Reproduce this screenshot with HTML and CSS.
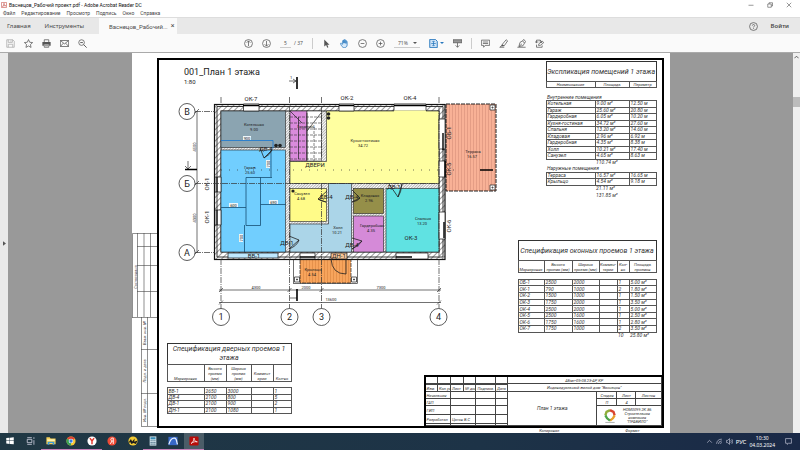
FILE: index.html
```html
<!DOCTYPE html>
<html lang="ru">
<head>
<meta charset="utf-8">
<title>Васнецов_Рабочий проект.pdf - Adobe Acrobat Reader DC</title>
<link rel="stylesheet" href="styles.css">
</head>
<body>
<div class="app">
  <header class="titlebar">
    <svg class="appicon" viewBox="0 0 12 12"><rect x=".7" y=".7" width="10.6" height="10.6" rx="1.5" fill="#fff" stroke="#c8554d" stroke-width="1.4"/><path d="M3 9c2-2 3-5 3-6.500C6 6 8 7.500 9.500 7.500 7 7 5 7.500 3 9z" fill="none" stroke="#b5302a"/></svg>
    <span class="wintitle">Васнецов_Рабочий проект.pdf - Adobe Acrobat Reader DC</span>
    <div class="winbtns">
      <button aria-label="Свернуть"><svg viewBox="0 0 12 12"><path d="M1 6.500h10"/></svg></button>
      <button aria-label="Развернуть"><svg viewBox="0 0 12 12"><path d="M1.500 4h7v6.500h-7zM4 4V1.500h7V8H8.500"/></svg></button>
      <button aria-label="Закрыть"><svg viewBox="0 0 12 12"><path d="M1.500 1.500l9 9M10.500 1.500l-9 9"/></svg></button>
    </div>
  </header>
  <nav class="menu"><button>Файл</button><button>Редактирование</button><button>Просмотр</button><button>Подпись</button><button>Окно</button><button>Справка</button></nav>
  <div class="tabs">
    <button class="tab">Главная</button><button class="tab">Инструменты</button>
    <div class="doctab"><span>Васнецов_Рабочий...</span><button aria-label="Закрыть вкладку">×</button></div>
    <div class="account"><button aria-label="Справка"><svg viewBox="0 0 24 24"><circle cx="12" cy="12" r="10.500"/><path d="M9 9.500c0-4 6-4 6 0 0 2-3 2.500-3 5M12 16.500v2"/></svg></button><button class="login">Войти</button></div>
  </div>
  <div class="toolbar">
    <div class="group files">
      <button class="off" aria-label="Сохранить"><svg viewBox="0 0 24 24"><path d="M2 2h16l4 4v16H2zM6 2v7h11V2M6 22v-8h12v8M13 4v3"/></svg></button>
      <button aria-label="Избранное"><svg viewBox="0 0 24 24"><path d="M12 1.500l3.200 7.200 7.800.8-5.800 5.300 1.600 7.700L12 18.600l-6.800 3.900 1.600-7.700L1 9.500l7.800-.8z"/></svg></button>
      <button aria-label="Печать"><svg viewBox="0 0 24 24"><path d="M6 8V2h12v6M6 14h12v8H6zM8 18h8"/><path class="fill" d="M1 8h22v10h-4v-5H5v5H1z"/></svg></button>
      <button aria-label="Почта"><svg viewBox="0 0 24 24"><path d="M1 4h22v16H1zM1 4l11 9 11-9M1 20l8-9M23 20l-8-9"/></svg></button>
      <button aria-label="Найти"><svg viewBox="0 0 24 24"><circle cx="9.500" cy="9.500" r="7.500"/><path d="M15 15l8 8M6 9.500h7" stroke-width="2.500"/></svg></button>
    </div>
    <div class="group">
      <button aria-label="Предыдущая страница"><svg viewBox="0 0 24 24"><circle cx="12" cy="12" r="10.500"/><path d="M12 19V5M7 10l5-5 5 5"/></svg></button>
      <button aria-label="Следующая страница"><svg viewBox="0 0 24 24"><circle cx="12" cy="12" r="10.500"/><path d="M12 5v14M7 14l5 5 5-5"/></svg></button>
      <label class="pager"><input value="5" aria-label="Страница"><span>/ 37</span></label>
      <i class="sep"></i>
      <button aria-label="Выделение"><svg viewBox="0 0 24 24"><path class="fill" d="M6 1v19l5-4 3 7 3-1-3-7h6z"/></svg></button>
      <button class="blue" aria-label="Рука"><svg viewBox="0 0 24 24"><path fill="#d8eafa" d="M7 14V5c0-2 3-2 3 0v6-8c0-2 3-2 3 0v8-7c0-2 3-2 3 0v8-5c0-2 3-2 3 0v9c0 4-3 7-7 7s-6-2-8-5l-3-6c1-2 3-1 6 2z"/></svg></button>
      <button aria-label="Уменьшить"><svg viewBox="0 0 24 24"><circle cx="12" cy="12" r="10.500"/><path d="M7 12h10"/></svg></button>
      <button aria-label="Увеличить"><svg viewBox="0 0 24 24"><circle cx="12" cy="12" r="10.500"/><path d="M7 12h10M12 7v10"/></svg></button>
      <div class="zoom"><select aria-label="Масштаб"><option>71%</option></select><i class="caret"></i></div>
      <button class="blue wide" aria-label="По ширине"><svg viewBox="0 0 24 24"><path d="M2 1h15l5 5v17H2z" fill="#cfe3f6" stroke-width="2.500"/><path d="M12 6v12M6 12h12M9 8l3-3 3 3M9 16l3 3 3-3"/></svg><i class="caret"></i></button>
      <button aria-label="Прокрутка"><svg viewBox="0 0 24 24"><path class="fill" d="M0 2h24v8H0z" fill-opacity=".6"/><path d="M0 2h24v8H0zM12 10v12M7 17l5 5 5-5"/></svg></button>
      <i class="sep"></i>
      <button aria-label="Комментарий"><svg viewBox="0 0 24 24"><path d="M1 3h22v14H11l-4 5v-5H1zM5 8h14M5 12h14" stroke-width="2"/></svg></button>
      <button aria-label="Выделить текст"><svg viewBox="0 0 24 24"><path d="M9 14L19 2l4 3-9 13H7zM7 18l-5 4h12"/><path class="fill" d="M9 14l5 4-8 2z"/></svg></button>
      <button aria-label="Подписать"><svg viewBox="0 0 24 24"><path d="M5 20l3-11 7-4 5 6-4 7zM5 20l8-7M15 5l3-4 5 6-3 4M1 22h22" stroke-width="2"/></svg></button>
      <button aria-label="Изменить"><svg viewBox="0 0 24 24"><path d="M4 11V3h10l5 5M4 15v7h15v-5M14 3v6h5M9 17l2-5 9-6 3 4-9 7zM0 8h9" stroke-width="2"/></svg></button>
    </div>
  </div>

  <main class="viewer">
    <button class="rail" aria-label="Панель навигации"><svg viewBox="0 0 4 6"><path d="M0 0l4 3-4 3z" fill="#555"/></svg></button>
    <div class="canvas">
      <article class="sheet">
        <svg class="margin" viewBox="132 54 25 374">
          <g fill="none" stroke="#444" stroke-width=".6"><path d="M132.500 318.500V234.500H157M137.500 234v84M144 234v84M150.500 234v84M137 247.500h20M137 266.500h20M137 292.500h20M132 318.500h25M141.500 318v109M147.500 318v109M141 350.500h16M141 394.500h16M141 427.500h16"/></g>
          <g class="mt"><text transform="translate(136.500 278) rotate(-90)">Согласовано</text><text transform="translate(146 334) rotate(-90)">Взам. инв. №</text><text transform="translate(146 372) rotate(-90)">Подп. и дата</text><text transform="translate(146 411) rotate(-90)">Инв. № подл.</text></g>
        </svg>
        <div class="body">
        <div class="frame">
          <div class="upper">
            <svg class="plan" viewBox="174 62 330 270">
              <defs>
                <pattern id="h" width="4" height="4" patternUnits="userSpaceOnUse" patternTransform="rotate(45)"><rect width="4" height="4" fill="#fff"/><path d="M0 0v4" stroke="#333" stroke-width="1"/></pattern>
                <pattern id="h2" width="2" height="2" patternUnits="userSpaceOnUse" patternTransform="rotate(45)"><rect width="2" height="2" fill="#fff"/><path d="M0 0v2" stroke="#444" stroke-width=".8"/></pattern>
                <pattern id="ter" x="446" width="3" height="10" patternUnits="userSpaceOnUse"><rect width="3" height="10" fill="#f8b196"/><path d="M.5 0v10" stroke="#d79079" stroke-width=".6"/></pattern>
                <pattern id="por" x="300" width="3" height="10" patternUnits="userSpaceOnUse"><rect width="3" height="10" fill="#f7a45c"/><path d="M.5 0v10" stroke="#d88440" stroke-width=".6"/></pattern>
              </defs>
              <text x="184" y="76" class="pt">001_План 1 этажа</text>
              <text x="184" y="85" class="ps">1:80</text>
              <rect x="446" y="105" width="50" height="87" fill="url(#ter)" stroke="#222" stroke-dasharray="4 1"/>
              <rect x="293.500" y="260" width="64" height="24.500" fill="#fff" stroke="#333" stroke-width=".7"/>
              <rect x="300" y="260" width="51" height="24" fill="url(#por)" stroke="#222" stroke-width=".7" stroke-dasharray="4 1"/>
              <rect x="214.500" y="105.500" width="230.500" height="155" fill="url(#h)" stroke="#111" stroke-width="1.200"/>
              <path d="M217 258V107.500H443V258z" fill="none" stroke="#222" stroke-width=".9"/>
              <rect x="221" y="112" width="218" height="141" fill="url(#h2)" stroke="#222"/>
              <g stroke="#222" stroke-width=".6">
                <rect x="221" y="112" width="64.500" height="36.500" fill="#8ba4b1"/>
                <rect x="221" y="151" width="64.500" height="102" fill="#71cefe"/>
                <path d="M326.500 112H439v72.500H290V162.500h36.500z" fill="#ffffa0"/>
                <rect x="290" y="112" width="17" height="50" fill="#da8bdc"/>
                <rect x="307" y="112" width="14.500" height="50" fill="#fff"/>
                <path d="M328.500 184.500h23V253H290v-28h38.500z" fill="#abd5e8"/>
                <rect x="290" y="189.500" width="36.500" height="33" fill="#fffb88"/>
                <rect x="353.500" y="189.500" width="30" height="25" fill="#958f49"/>
                <rect x="353.500" y="217" width="30" height="36" fill="#d58ad8"/>
                <rect x="386" y="189.500" width="53" height="63.500" fill="#60e2e2"/>
              </g>
              <!-- Openings in the walls -->
              <g fill="#fff" stroke="#111" stroke-width=".7">
                <path d="M243.500 105h15.500v7h-15.500zM339 105h15v7h-15zM394 105h32v7h-32zM439 120h6v30h-6zM439 162h6v16h-6zM439 213h6v27h-6zM396 254h32v6h-32zM215 178h6v15h-6zM215 211h6v15h-6zM300 254h15v6h-15z"/>
                <path d="M228 254h50v5h-50z" fill="#bfe9ff"/><path d="M331 254h16v6h-16z" fill="#f7c79a"/>
              </g>
              <path d="M217 178v15M217 211v15M443 134v17M445 162v16M444 223v16M396 258h16M300 258h15M243 106.500h16M339 106.500h15M394 106.500h32" fill="none" stroke="#000" stroke-width="1.400"/>
              <path d="M394 112.500h32" stroke="#ffffa0" stroke-width="2"/>
              <!-- Staircase -->
              <path d="M290 118h31M290 124h31M290 130h31M290 136h31M290 142h31M290 148h31M290 154h31M290 160h31M314 128v34" fill="none" stroke="#333" stroke-width=".6" stroke-dasharray="3 1"/>
              <path d="M298.500 160v-42M307 114v47M307 132l14-18M290 112l12 12" fill="none" stroke="#222" stroke-width=".7"/>
              <!-- Axes and dimensions -->
              <g fill="none" stroke="#333" stroke-width=".7">
                <path stroke-dasharray="6 1 1 1" d="M195 112.500h20M195 184.500h244M195 253.500h20M221 98v7M289.500 98v162M321.500 98v60M321.500 185v75M221 260v50M289.500 260v50M321.500 260v50M439 98v212"/>
                <path d="M197 112v142M219 291h222M219 303.500h222M195 114l4-4M195 186l4-4M195 255l4-4M219 293l4-4M287.500 293l4-4M319.500 293l4-4M437 293l4-4M219 305.500l4-4M437 305.500l4-4M289 82h7M293 80l3 2-3 2M290 299h7M188 162v8M185 167l3 3 3-3"/>
                <path d="M221 171h240" stroke-dasharray="1 7"/>
              </g>
              <path d="M297 78v12M297 290v12M185 170.500h12M480 171h13" stroke="#000" stroke-width="1.600"/>
              <g fill="none" stroke="#174f74" stroke-width=".8"><path d="M246 226.500V178.500h14.500v48zM221 208.500h25M260.500 205.500H286M244.500 226v27M271 148v30M260 178.500h12"/><path d="M221 141.500h52v8" stroke="#1677d2"/></g>
              <g fill="#edf6fb"><path d="M243 137h8v4h-8zM229 204h9v4h-9zM269 201h9v4h-9zM239 235h4v8h-4zM266 161h4v8h-4z"/></g>
              <!-- Door swings -->
              <g fill="none" stroke="#222" stroke-width=".8"><path d="M260 149l4 10 8-8q-2 5-8 8M289 237l10 4-10 9q8-3 10-9M327 192l-9 8 8 3q-6-1-8-3M352 191l8 8-8 4q6-1 8-4M352 239l10 3-10 8q7-3 10-8M389 185l9 13 4-13q-1 9-4 13M331 260q1 15 15 15v-15"/></g>
              <g fill="#fff" stroke="#333" stroke-width=".8"><path d="M490 106h5v5h-5zM490 186h5v5h-5zM294.500 278h5v5h-5zM351.500 278h5v5h-5z"/><path d="M492 108h1v1h-1zM492 188h1v1h-1zM296.500 280h1v1h-1zM353.500 280h1v1h-1z"/></g>
              <g fill="#222"><circle cx="276" cy="146.500" r="1.800"/><circle cx="280" cy="146.500" r="1.800"/><circle cx="328.500" cy="115" r="1.800"/><circle cx="328.500" cy="119" r="1.800"/><circle cx="293" cy="192" r="1.600"/></g>
              <g fill="#fff" stroke="#333" stroke-width=".8"><circle cx="187" cy="112.500" r="8"/><circle cx="187" cy="184.500" r="8"/><circle cx="187" cy="253.500" r="8"/><circle cx="221" cy="318" r="8.500"/><circle cx="289.500" cy="318" r="8.500"/><circle cx="321.500" cy="318" r="8.500"/><circle cx="438.500" cy="318" r="8.500"/></g>
              <g class="ax"><text x="187" y="116">В</text><text x="187" y="188">Б</text><text x="187" y="257">А</text><text x="221" y="321">1</text><text x="289.500" y="321">2</text><text x="321.500" y="321">3</text><text x="438.500" y="321">4</text></g>
              <g class="lb">
                <text x="251" y="102">ОК-7</text><text x="347" y="101">ОК-2</text><text x="410" y="101">ОК-4</text><text x="411" y="241">ОК-3</text><text x="254" y="259">ВВ-1</text><text x="287" y="246">ДВ-1</text><text x="326" y="200">ДВ-4</text><text x="352" y="200">ДВ-4</text><text x="352" y="248">ДВ-4</text><text x="394" y="190">ДВ-1</text><text x="339" y="259">ДН-1</text><text x="266" y="152">ДВ-4</text><text x="315" y="168">ДВЕРИ</text>
                <text transform="translate(209 185) rotate(-90)">ОК-1</text><text transform="translate(209 218) rotate(-90)">ОК-1</text><text transform="translate(451 134) rotate(-90)">ОБ-1</text><text transform="translate(451 170) rotate(-90)">ОК-5</text><text transform="translate(451 227) rotate(-90)">ОК-6</text>
              </g>
              <g class="rm">
                <text x="254" y="127">Котельная</text><text x="254" y="132">9.00</text><text x="250" y="170">Гараж</text><text x="250" y="175">25.60</text><text x="365" y="143">Кухня-гостиная</text><text x="363" y="148">34.72</text><text x="306" y="129">Гардероб</text><text x="302" y="196">Санузел</text><text x="301" y="201">4.68</text><text x="338" y="230">Холл</text><text x="337" y="235">10.21</text><text x="370" y="198">Кладовая</text><text x="369" y="203">2.96</text><text x="372" y="228">Гардеробная</text><text x="371" y="233">4.35</text><text x="423" y="221">Спальня</text><text x="422" y="226">13.20</text><text x="473" y="154">Терраса</text><text x="472" y="159">16.57</text><text x="313" y="272">Крыльцо</text><text x="312" y="277">4.54</text>
              </g>
              <g class="dm"><text x="256" y="290">4300</text><text x="306" y="290">2000</text><text x="381" y="290">7300</text><text x="331" y="302">13600</text><text transform="translate(196 148) rotate(-90)">4500</text><text transform="translate(196 219) rotate(-90)">4300</text><text x="247" y="141">900</text><text x="233.500" y="208">600</text><text x="273.500" y="205">690</text><text transform="translate(242.500 239) rotate(-90)">700</text><text transform="translate(269.500 165) rotate(-90)">700</text><text x="291" y="80">1</text></g>
            </svg>
            <div class="lists">
              <table class="spec rooms">
                <caption>Экспликация помещений 1 этажа</caption>
                <colgroup><col class="w49"><col class="w34"><col class="w27"></colgroup>
                <thead><tr><th>Наименование</th><th>Площадь</th><th>Периметр</th></tr></thead>
                <tbody>
                <tr class="open gap"><td colspan="3"></td></tr>
                <tr class="open"><td colspan="3">Внутренние помещения</td></tr>
                <tr><td>Котельная</td><td>9.00 м²</td><td>12.50 м</td></tr>
                <tr><td>Гараж</td><td>25.60 м²</td><td>20.80 м</td></tr>
                <tr><td>Гардеробная</td><td>6.05 м²</td><td>10.20 м</td></tr>
                <tr><td>Кухня-гостиная</td><td>34.72 м²</td><td>27.60 м</td></tr>
                <tr><td>Спальня</td><td>13.20 м²</td><td>14.60 м</td></tr>
                <tr><td>Кладовая</td><td>2.96 м²</td><td>6.92 м</td></tr>
                <tr><td>Гардеробная</td><td>4.35 м²</td><td>8.38 м</td></tr>
                <tr><td>Холл</td><td>10.21 м²</td><td>17.40 м</td></tr>
                <tr><td>Санузел</td><td>4.65 м²</td><td>8.63 м</td></tr>
                <tr class="open"><td></td><td>110.74 м²</td><td></td></tr>
                <tr class="open"><td colspan="3">Наружные помещения</td></tr>
                <tr><td>Терраса</td><td>16.57 м²</td><td>16.65 м</td></tr>
                <tr><td>Крыльцо</td><td>4.54 м²</td><td>9.18 м</td></tr>
                <tr class="open"><td></td><td>21.11 м²</td><td></td></tr>
                <tr class="open"><td></td><td>131.85 м²</td><td></td></tr>
                </tbody>
              </table>
              <table class="spec windows">
                <caption>Спецификация оконных проемов 1 этажа</caption>
                <colgroup><col class="w26"><col class="w28"><col class="w27"><col class="w18"><col class="w12"><col class="w27"></colgroup>
                <thead><tr><th>Маркировка</th><th>Высота проема (мм)</th><th>Ширина проема (мм)</th><th>Коммен-<br>тарии</th><th>Кол-<br>во</th><th>Площадь проемов</th></tr></thead>
                <tbody>
                <tr class="open gap"><td colspan="6"></td></tr>
                <tr><td>ОБ-1</td><td>2500</td><td>2000</td><td></td><td>1</td><td>5.00 м²</td></tr>
                <tr><td>ОК-1</td><td>790</td><td>1000</td><td></td><td>2</td><td>1.80 м²</td></tr>
                <tr><td>ОК-2</td><td>1500</td><td>1000</td><td></td><td>1</td><td>1.50 м²</td></tr>
                <tr><td>ОК-3</td><td>1750</td><td>2000</td><td></td><td>1</td><td>3.50 м²</td></tr>
                <tr><td>ОК-4</td><td>2500</td><td>2000</td><td></td><td>1</td><td>5.00 м²</td></tr>
                <tr><td>ОК-5</td><td>2500</td><td>1600</td><td></td><td>1</td><td>2.50 м²</td></tr>
                <tr><td>ОК-6</td><td>1750</td><td>1600</td><td></td><td>1</td><td>2.80 м²</td></tr>
                <tr><td>ОК-7</td><td>1750</td><td>1000</td><td></td><td>2</td><td>3.50 м²</td></tr>
                <tr class="open"><td colspan="4"></td><td>10</td><td>25.80 м²</td></tr>
                </tbody>
              </table>
            </div>
          </div>
          <div class="lower">
            <table class="spec doors">
              <caption>Спецификация дверных проемов 1 этажа</caption>
              <colgroup><col class="w37"><col class="w22"><col class="w25"><col class="w22"><col class="w18"></colgroup>
              <thead><tr><th>Маркировка</th><th>Высота<br>проема<br>(мм)</th><th>Ширина<br>проема<br>(мм)</th><th>Коммент<br>арии</th><th>Кол-во</th></tr></thead>
              <tbody>
              <tr class="open gap"><td colspan="5"></td></tr>
              <tr><td>ВВ-1</td><td>2650</td><td>3000</td><td></td><td>1</td></tr>
              <tr><td>ДВ-4</td><td>2100</td><td>800</td><td></td><td>5</td></tr>
              <tr><td>ДВ-1</td><td>2100</td><td>900</td><td></td><td>2</td></tr>
              <tr><td>ДН-1</td><td>2100</td><td>1080</td><td></td><td>1</td></tr>
              </tbody>
            </table>
            <table class="stamp">
              <colgroup><col class="w13"><col class="w13"><col class="w13"><col class="w12"><col class="w20"><col class="w12"><col><col class="w20"><col class="w19"><col class="w25"></colgroup>
              <tr><td></td><td></td><td></td><td></td><td></td><td></td><td colspan="4" class="c">АБмт-05-08.23-АР, КР</td></tr>
              <tr><td></td><td></td><td></td><td></td><td></td><td></td><td colspan="4" rowspan="2" class="c">Индивидуальный жилой дом "Васнецов"</td></tr>
              <tr><td>Изм.</td><td>Кол.уч</td><td>Лист</td><td>№ док</td><td class="c">Подпись</td><td>Дата</td></tr>
              <tr><td colspan="2">Начальник</td><td colspan="2"></td><td></td><td></td><td rowspan="5" class="c big">План 1 этажа</td><td class="c">Стадия</td><td class="c">Лист</td><td class="c">Листов</td></tr>
              <tr><td colspan="2">ГАП</td><td colspan="2"></td><td></td><td></td><td class="c">П</td><td class="c">4</td><td></td></tr>
              <tr><td colspan="2">ГИП</td><td colspan="2"></td><td></td><td></td><td colspan="3" rowspan="3"><div class="firm"><svg viewBox="0 0 24 24"><g fill="none" stroke-width="4"><path d="M4 11l2-6 6-3" stroke="#8fae3a"/><path d="M12 2l6 3 2 6" stroke="#d9432f"/><path d="M20 11l-3 5-5 4" stroke="#e8a02c"/><path d="M12 20l-5-4-3-5" stroke="#4fa548"/></g><path d="M4 23h16" stroke="#777"/></svg><span>НОМ0099.2К.86<br>Строительная<br>компания<br>"ПРАВИЛО"</span></div></td></tr>
              <tr><td colspan="2">Разработал</td><td colspan="2">Цагов В.С</td><td></td><td></td></tr>
              <tr><td colspan="2"></td><td colspan="2"></td><td></td><td></td></tr>
            </table>
          </div>
        </div>
        <div class="foot"><span>Копировал</span><span>Формат</span></div>
        </div>
      </article>
    </div>
    <div class="scroll"><button aria-label="Вверх"><svg viewBox="0 0 6 4"><path d="M.5 3.500L3 1l2.500 2.500" fill="none" stroke="#444"/></svg></button><i class="thumb"></i></div>
  </main>

  <footer class="taskbar">
    <div class="pins">
    <button aria-label="Пуск"><svg viewBox="0 0 24 24"><path fill="#fff" d="M3 5l8-1v7H3zM12 4l9-1v8h-9zM3 12h8v7l-8-1zM12 12h9v8l-9-1z"/></svg></button>
    <button aria-label="Представление задач"><svg viewBox="0 0 24 24"><path fill="none" stroke="#dde" stroke-width="1.800" d="M3 8h11v8H3zM3 4h11M3 20h11M19 3v4M19 10v11"/></svg></button>
    <button class="run" aria-label="Проводник"><svg viewBox="0 0 24 24"><path fill="#f5cf58" d="M1 3h8l2 3h12v14H1z"/><path fill="#fff3b5" d="M3 8h18v4H3z"/><path fill="#3b9bd9" d="M4 14h16v7h-4v-4H8v4H4z"/></svg></button>
    <button class="run" aria-label="Chrome"><svg viewBox="0 0 24 24"><circle cx="12" cy="12" r="11" fill="#f6c737"/><path fill="#dc4437" d="M12 12L2.500 6.500a11 11 0 0 1 19 0z"/><path fill="#39a257" d="M12 12v11A11 11 0 0 1 2.500 6.500z"/><circle cx="12" cy="12" r="5.500" fill="#fff"/><circle cx="12" cy="12" r="4" fill="#377ce0"/></svg></button>
    <button class="run" aria-label="Яндекс Браузер"><svg viewBox="0 0 24 24"><circle cx="12" cy="12" r="11" fill="#fff"/><path d="M7 5l5 7 5-7M12 12v8" stroke="#e43a30" stroke-width="3.500" fill="none"/></svg></button>
    <button aria-label="Яндекс"><svg viewBox="0 0 24 24"><circle cx="12" cy="12" r="11" fill="#ef4b36"/><path d="M15 19V5h-2c-5 0-5 7 0 7h2M12 12l-4 7" stroke="#fff" stroke-width="2.200" fill="none"/></svg></button>
    <button aria-label="Приложение"><svg viewBox="0 0 24 24"><circle cx="12" cy="12" r="11" fill="#f3cb35"/><path d="M1 16l6-9 3 6 6-7-1 8 8-3-4 8-6-2-5 2-2-4z" fill="#1c1c1c"/></svg></button>
    <button class="run" aria-label="Калькулятор"><svg viewBox="0 0 24 24"><path fill="#d8e8ef" d="M4 1h16v22H4z"/><path fill="#368bb5" d="M6 3h12v5H6z"/><path stroke="#4a6f85" stroke-width="2.500" stroke-dasharray="3 1.500" d="M6 11.500h13M6 15.500h13M6 19.500h13"/></svg></button>
    <button class="run" aria-label="Чертежи"><svg viewBox="0 0 24 24"><path fill="#3768c8" d="M1 2h22v20H1z"/><path d="M2 20C5 9 10 4 16 5s4 10 7 15" fill="none" stroke="#e6f0ff" stroke-width="3"/></svg></button>
    <button class="run active" aria-label="Acrobat Reader"><svg viewBox="0 0 24 24"><rect x="1" y="1" width="22" height="22" rx="3" fill="#b90c09"/><path d="M5 18c5-3 7-9 7-13 0 6 4 9 8 9-5-1-10 0-15 4z" fill="none" stroke="#fff" stroke-width="1.800"/></svg></button>
    </div>
    <div class="tray">
      <svg viewBox="0 0 12 12"><path d="M2 8l4-4 4 4"/></svg><svg viewBox="0 0 12 12"><path d="M1 10a9 9 0 0 1 9-8M4 10a6 6 0 0 1 6-5M7 10a3 3 0 0 1 3-2"/></svg><svg viewBox="0 0 12 12"><path d="M1 4h2l3-3v10L3 8H1zM8 4q2 2 0 4M10 2q3 4 0 8"/></svg>
      <span class="lang">РУС</span>
      <div class="clock"><span>10:30</span><span>04.03.2024</span></div>
      <svg viewBox="0 0 12 12"><path d="M1 1h10v8H6l-2 2V9H1z"/></svg>
    </div>
  </footer>
</div>
</body>
</html>
```
FILE: styles.css
```css
* { box-sizing: border-box; }
body { margin: 0; font-family: "Noto Sans", "Open Sans", sans-serif; color: #333; }
button, input, select { font: inherit; color: inherit; border: 0; padding: 0; margin: 0; background: none; }
button { display: flex; align-items: center; justify-content: center; }
svg { display: block; }
.app { display: flex; flex-direction: column; height: 100vh; overflow: hidden; background: #fff; }

.titlebar, .menu, .doctab { font-family: Roboto, "Liberation Sans", sans-serif; }
.titlebar { display: flex; align-items: center; height: 9px; padding: 0 8px 0 1px; gap: 2px; font-size: 5px; line-height: 8px; color: #111; }
.appicon { width: 6px; height: 6px; }
.winbtns { display: flex; gap: 13px; margin-left: auto; }
.winbtns svg { width: 6px; height: 6px; fill: none; stroke: #333; }

.menu { display: flex; gap: 6px; height: 9px; padding: 0 3px; font-size: 5px; color: #444; border-bottom: 1px solid #ddd; }
.tabs { display: flex; height: 16px; background: #e8e8e8; font-size: 6px; color: #4a4a4a; }
.tab { padding: 0 7px; }
.doctab { display: flex; align-items: center; gap: 3px; margin-left: 8px; padding: 0 3px 0 10px; background: #fafafa; font-size: 6px; }
.doctab button { font-size: 7px; }
.account { display: flex; align-items: center; gap: 13px; margin-left: auto; padding-right: 11px; }
.account svg { width: 9px; height: 9px; fill: none; stroke: #555; stroke-width: 2; }
.login { font-weight: 600; }

.toolbar { display: grid; grid-template-columns: 1fr auto 1fr; align-items: center; height: 19px; padding: 0 18px 0 6px; background: #fafafa; border-bottom: 1px solid #aaa; font-size: 5px; color: #555; }
.group { display: flex; align-items: center; gap: 9px; }
.toolbar svg { width: 9px; height: 9px; fill: none; stroke: currentColor; stroke-width: 2; }
.toolbar .fill { fill: currentColor; stroke: none; }
.toolbar .off { color: #aaa; }
.toolbar .blue { color: #2878be; }
.wide { gap: 2px; }
.pager { display: flex; align-items: center; gap: 3px; }
.pager input { width: 11px; height: 10px; text-align: center; border-bottom: 1px solid #ccc; }
.sep { width: 1px; height: 11px; background: #ccc; }
.zoom { display: flex; align-items: center; width: 26px; height: 10px; border-bottom: 1px solid #ccc; }
.zoom select { appearance: none; width: 19px; padding-left: 4px; }
.caret { border: 2px solid transparent; border-top-color: currentColor; border-bottom: 0; }

.viewer { display: flex; flex: 1; min-height: 0; }
.rail { width: 8px; background: #e9e9e9; }
.rail svg { width: 3px; height: 5px; }
.canvas { flex: 1; overflow: hidden; background: #999; }
.scroll { width: 7px; background: #efefef; }
.scroll button { width: 7px; height: 8px; }
.scroll svg { width: 5px; height: 4px; }
.thumb { display: block; height: 10px; margin-top: 36px; background: #bcbcbc; }

.sheet { display: flex; width: 538px; min-height: 100%; margin: 0 auto; background: #fff; color: #333; font-family: Roboto, "Liberation Sans", sans-serif; font-style: italic; }
.margin { width: 25px; height: 374px; flex: none; }
.mt text { font-size: 4px; text-anchor: middle; fill: #444; }
.body { flex: 1; padding: 5px 6px 0 0; }
.frame { display: flex; flex-direction: column; border: 2px solid #000; }
.upper { display: flex; justify-content: space-between; padding: 1px 5px 0 15px; }
.plan { width: 330px; height: 270px; }
.lists { display: flex; flex-direction: column; align-items: flex-end; gap: 42px; }
.lower { display: flex; justify-content: space-between; align-items: flex-end; padding: 4px 0 0 8px; }
.foot { display: flex; gap: 66px; justify-content: flex-end; padding-right: 24px; font-size: 4px; line-height: 5px; }

.plan text { font-family: Roboto, "Liberation Sans", sans-serif; fill: #222; font-style: normal; }
.plan .pt { font-size: 9px; }
.plan .ps { font-size: 6px; }
.ax text { font-size: 9px; text-anchor: middle; }
.lb text { font-size: 6px; text-anchor: middle; }
.rm text { font-size: 4px; text-anchor: middle; }
.dm text { font-size: 4px; text-anchor: middle; }

table { border-collapse: collapse; table-layout: fixed; }
th, td { padding: 0; font-weight: 400; overflow: hidden; white-space: nowrap; border: 1px solid #555; }
.spec { font-size: 5px; line-height: 5px; }
.spec caption { border: 1px solid #333; border-bottom: 0; font-size: 7px; line-height: 9px; padding: 6px 0 4px; }
.spec th { white-space: normal; vertical-align: bottom; font-size: 4px; line-height: 5px; }
.spec td { padding-left: 1px; height: 6px; }
.spec .open td { border-left: 0; border-right: 0; border-top-color: transparent; border-bottom: 0; }
.spec .gap td { border-top-color: #555; }
.rooms { width: 110px; height: 117px; }
.rooms caption, .windows caption { white-space: nowrap; }
.windows { width: 138px; height: 79px; }
.windows th { height: 12px; }
.doors { width: 125px; height: 50px; margin-bottom: 12px; }
.doors th { height: 17px; }
.doors caption { padding: 1px 0; }
.w49 { width: 49px; } .w34 { width: 34px; } .w26 { width: 26px; } .w28 { width: 28px; } .w27 { width: 27px; }
.w18 { width: 18px; } .w12 { width: 12px; } .w37 { width: 37px; } .w22 { width: 22px; } .w25 { width: 25px; }
.w13 { width: 13px; } .w20 { width: 20px; } .w19 { width: 19px; }

.stamp { width: 238px; height: 51px; border-left: 2px solid #000; border-top: 2px solid #000; font-size: 4px; line-height: 5px; }
.stamp td { padding: 0 1px; border-color: #444; }
.stamp .c { text-align: center; }
.stamp .big { font-size: 5px; }
.firm { display: flex; align-items: center; justify-content: space-between; padding: 0 8px 0 5px; text-align: center; font-size: 4px; line-height: 4px; }
.firm svg { width: 14px; height: 14px; }

.taskbar { display: flex; align-items: stretch; height: 17px; background: linear-gradient(90deg, #203844, #1d3347 60%, #1a2947); color: #fff; }
.pins { display: flex; width: 204px; }
.pins button { flex: 1; border-bottom: 1px solid transparent; }
.pins svg { width: 10px; height: 10px; }
.pins .run { border-bottom-color: #c77fb8; }
.pins .active { background: #4b5d68; }
.tray { display: flex; align-items: center; gap: 3px; margin-left: auto; padding-right: 8px; font-size: 6px; }
.tray svg { width: 7px; height: 7px; fill: none; stroke: #dde; }
.clock { display: flex; flex-direction: column; align-items: center; font-size: 5px; line-height: 7px; padding-right: 7px; }
```
